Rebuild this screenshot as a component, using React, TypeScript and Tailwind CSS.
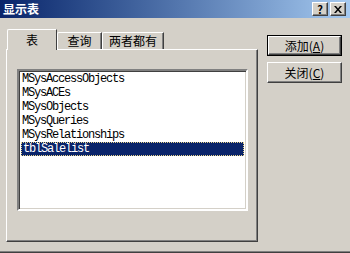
import React from 'react'

const font = { fontFamily: '"Noto Sans CJK SC", "Noto Sans", sans-serif' }

const tables = [
  'MSysAccessObjects',
  'MSysACEs',
  'MSysObjects',
  'MSysQueries',
  'MSysRelationships',
  'tblSalelist',
]

function CaptionButton({ children }: { children: React.ReactNode }) {
  return (
    <div className="w-[16px] h-[14px] bg-[#D4D0C8] border border-t-white border-l-white border-r-[#404040] border-b-[#404040] shadow-[inset_-1px_-1px_0_#808080] flex items-center justify-center text-black text-[11px] font-bold leading-none">
      {children}
    </div>
  )
}

function Tab({ label, selected, width }: { label: string; selected?: boolean; width: string }) {
  if (selected) {
    return (
      <div
        className={`${width} h-[21px] ml-[1px] -mb-px relative z-10 bg-[#D4D0C8] border-t border-l border-r border-t-white border-l-white border-r-[#404040] rounded-tl-[2px] flex items-start justify-center pt-[2px] text-[12px] leading-[16px] text-black`}
      >
        {label}
      </div>
    )
  }
  return (
    <div
      className={`${width} h-[17px] bg-[#D4D0C8] border-t border-l border-r border-t-white border-l-white border-r-[#404040] shadow-[inset_-1px_0_0_#808080] rounded-tl-[2px] flex items-start justify-center text-[12px] leading-[16px] text-black`}
    >
      {label}
    </div>
  )
}

function PushButton({ children, isDefault }: { children: React.ReactNode; isDefault?: boolean }) {
  return (
    <div className={`w-[75px] h-[21px] ${isDefault ? 'border border-black' : ''}`}>
      <div className="w-full h-full bg-[#D4D0C8] border border-t-white border-l-white border-r-[#404040] border-b-[#404040] shadow-[inset_-1px_-1px_0_#808080] flex items-center justify-center text-[12px] text-black leading-none">
        {children}
      </div>
    </div>
  )
}

export default function App() {
  return (
    <div className="w-[350px] h-[253px] bg-[#D4D0C8] overflow-hidden flex flex-col" style={font}>
      {/* caption */}
      <div className="h-[18px] shrink-0 bg-gradient-to-r from-[#0A246A] to-[#A6CAF0] flex items-center justify-between pl-[3px] pr-[4px]">
        <span className="text-white font-bold text-[12px] leading-none">显示表</span>
        <div className="flex gap-[2px]">
          <CaptionButton>?</CaptionButton>
          <CaptionButton>
            <svg width="8" height="7" viewBox="0 0 8 7">
              <path d="M0 0h2l2 2.5L6 0h2L5 3.5 8 7H6L4 4.5 2 7H0l3-3.5z" fill="#000" />
            </svg>
          </CaptionButton>
        </div>
      </div>

      {/* body */}
      <div className="flex-1 flex pt-[11px]">
        <div className="ml-[6px] w-[252px] flex flex-col">
          <div className="h-[20px] flex items-end">
            <Tab label="表" selected width="w-[50px]" />
            <Tab label="查询" width="w-[45px]" />
            <Tab label="两者都有" width="w-[62px]" />
          </div>
          <div className="h-[193px] border border-t-white border-l-white border-r-[#404040] border-b-[#404040] shadow-[inset_-1px_-1px_0_#808080] pt-[19px] pl-[10px]">
            <div className="w-[231px] h-[142px] bg-white border-2 border-t-[#808080] border-l-[#808080] border-r-white border-b-white shadow-[inset_1px_1px_0_#404040,inset_-1px_-1px_0_#D4D0C8] pt-px pl-px pr-[2px]">
              {tables.map((t, i) => {
                const sel = i === tables.length - 1
                return (
                  <div
                    key={t}
                    className={`h-[14px] pl-[1px] ml-px flex items-center text-[12px] tracking-[-1.2px] ${
                      sel ? 'bg-[#0A246A] text-white border border-dotted border-[#E8D48A]' : 'text-black'
                    }`}
                    style={{ fontFamily: '"Liberation Mono", monospace' }}
                  >
                    {t}
                  </div>
                )
              })}
            </div>
          </div>
        </div>

        <div className="ml-[9px] pt-[6px] flex flex-col gap-[6px]">
          <PushButton isDefault>
            添加(<span className="underline">A</span>)
          </PushButton>
          <PushButton>
            关闭(<span className="underline">C</span>)
          </PushButton>
        </div>
      </div>

      <div className="h-[2px] shrink-0 border-t border-t-[#808080] border-b border-b-[#404040]" />
    </div>
  )
}
